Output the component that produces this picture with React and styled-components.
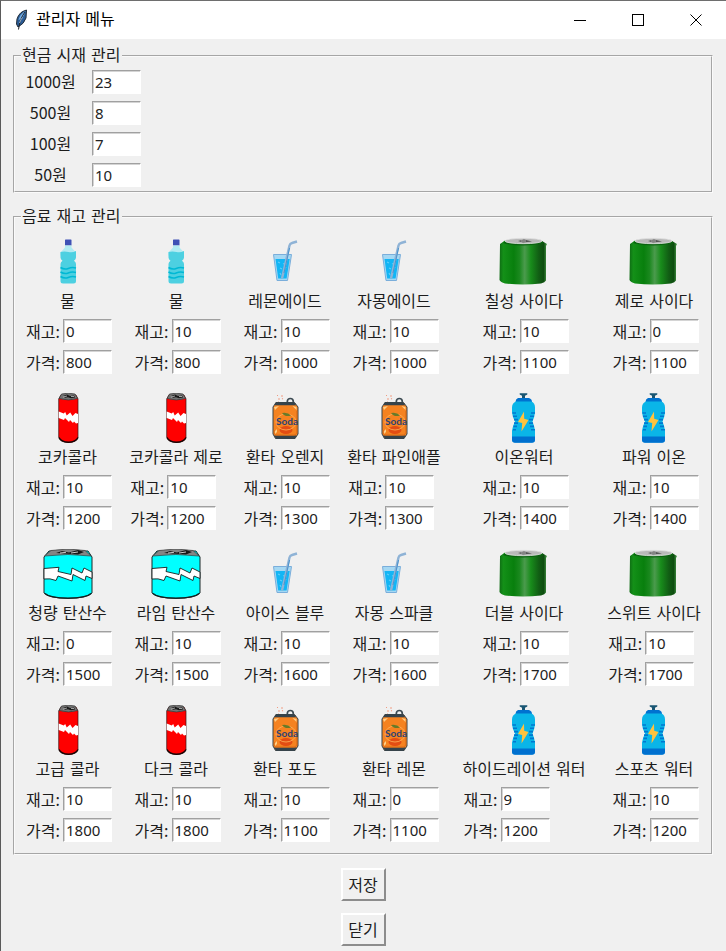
import React, { useId } from "react";
import styled, { createGlobalStyle } from "styled-components";

const GlobalStyle = createGlobalStyle`
  *, *::before, *::after { box-sizing: border-box; }
  body {
    margin: 0;
    background: #f0f0f0;
    color: #1c1c1c;
    font: 16px/22px "Noto Sans CJK KR", sans-serif;
  }
`;

const headingFont = `"DejaVu Sans", "Noto Sans CJK KR", sans-serif`;

const Window = styled.div`
  min-height: 100vh;
  border-top: 1px solid #6e6e6e;
  border-left: 1px solid #5a5a5a;
  background: #f0f0f0;
`;

const TitleBar = styled.header`
  display: flex;
  align-items: center;
  height: 38px;
  padding: 0 1px 0 12px;
  background: #fff;
  color: #000;
`;

const Title = styled.h1`
  flex: 1;
  margin: 0 0 0 6px;
  font-family: ${headingFont};
  font-size: 16px;
  font-weight: 400;
`;

const CaptionButton = styled.button`
  display: flex;
  align-items: center;
  justify-content: center;
  width: 58px;
  height: 38px;
  padding: 0;
  border: 0;
  background: transparent;
`;

const Content = styled.main`
  display: flex;
  flex-direction: column;
  gap: 13px;
  padding: 6px 13px 5px 12px;
`;

const Group = styled.fieldset`
  min-width: 0;
  margin: 0;
  padding: 0;
  border: 2px groove #fafafa;
`;

const Legend = styled.legend`
  margin-left: 6px;
  padding: 0 1px;
  font-family: ${headingFont};
`;

const CashGrid = styled.div`
  display: grid;
  grid-template-columns: 59px 49px;
  grid-auto-rows: 24px;
  column-gap: 12px;
  row-gap: 7px;
  padding: 3px 6px 4px;
`;

const CashLabel = styled.label`
  text-align: center;
  line-height: 22px;
`;

const NumberBox = styled.input`
  width: 49px;
  height: 24px;
  padding: 0 1px 1px 2px;
  border: 1px solid;
  border-color: #a0a0a0 #fff #fff #a0a0a0;
  border-radius: 0;
  outline: 0;
  background: #fff;
  box-shadow: inset 1px 1px #d4d4d4;
  color: #222;
  font: 15px/20px "Noto Sans", sans-serif;
`;

const DrinkGrid = styled.div`
  display: grid;
  grid-template-columns: 105fr 112fr 106fr 112fr 148fr 112fr;
  row-gap: 19px;
  justify-items: center;
  padding: 9px 1px 11px 0;
`;

const Drink = styled.section`
  display: flex;
  flex-direction: column;
  align-items: center;
  min-width: 89px;
`;

const DrinkName = styled.h2`
  margin: 0;
  padding: 0 2px;
  font-family: ${headingFont};
  font-size: 16px;
  font-weight: 400;
  line-height: 30px;
  height: 32px;
  white-space: nowrap;
`;

const Fields = styled.div`
  display: grid;
  grid-template-columns: 37px 49px;
  grid-auto-rows: 24px;
  row-gap: 7px;
  align-self: flex-start;
  padding-left: 3px;
`;

const FieldLabel = styled.label`
  line-height: 24px;
`;

const Picture = styled.svg`
  display: block;
  width: 50px;
  height: 50px;
`;

const Actions = styled.div`
  display: flex;
  flex-direction: column;
  align-items: center;
  gap: 12px;
`;

const PushButton = styled.button`
  width: 45px;
  height: 33px;
  padding: 0 0 2px;
  border: 2px solid;
  border-color: #fff #8c8c8c #8c8c8c #fff;
  background: #f0f0f0;
  color: #1c1c1c;
  font: inherit;
`;

function Water() {
  return (
    <Picture viewBox="0 0 50 50" aria-hidden="true">
      <rect x="22" y="2.5" width="6.5" height="6" rx=".6" fill="#3f51b5" />
      <path d="M22 8.5h6.5v2l4.500 5v3H17.500v-3l4.500-5z" fill="#b2ebf2" />
      <path d="M17.500 15q4-1 8 0t7.500-1v6.500q0 2-2 3.200 2 1.200 2 3.300v17q0 2.500-2.500 2.500H20q-2.500 0-2.500-2.500V27q0-2 2-3.300-2-1.200-2-3.200z" fill="#4dd0e1" />
      <path d="M17.500 30.500q4 2.500 7.700 1t7.800-.5M17.500 35q4 2.500 7.700 1t7.800-.5M17.500 39.500q4 2.500 7.700 1t7.800-.5" fill="none" stroke="#00b8d4" strokeWidth="1.500" />
    </Picture>
  );
}

function Ade() {
  return (
    <Picture viewBox="0 0 50 50" aria-hidden="true">
      <path d="M13.500 17.500h18L27.500 43.500H17z" fill="#a5d8f3" stroke="#7aaedb" strokeWidth="1" />
      <path d="M15.500 22h14.200L26.600 41.500H18.200z" fill="#12b5f5" />
      <path d="M18 25l2 1m3 1 3-1m-6 5 2 1m-2 4 1 2m4-9 1 2" stroke="#5fcdf8" strokeWidth="1.200" />
      <path d="M22 41.500 29.500 8.500Q30 6.500 32 6L37 4.500" fill="none" stroke="#8fb3d6" strokeWidth="2.400" />
      <path d="M24 36 29.500 11" stroke="#4a93ce" strokeWidth="1" />
    </Picture>
  );
}

function Cider() {
  const id = useId();
  return (
    <Picture viewBox="0 0 50 50" aria-hidden="true">
      <defs>
        <linearGradient id={id}>
          <stop offset="0" stopColor="#0f6d14" />
          <stop offset=".08" stopColor="#149018" />
          <stop offset=".3" stopColor="#087f0d" />
          <stop offset=".42" stopColor="#1a881e" />
          <stop offset=".53" stopColor="#4b9b4d" />
          <stop offset=".66" stopColor="#188c1b" />
          <stop offset=".83" stopColor="#115d14" />
          <stop offset=".93" stopColor="#0e4d10" />
          <stop offset="1" stopColor="#4a9c4a" />
        </linearGradient>
      </defs>
      <path d="M6 3.500 1 7 .500 43q1 2 5.500 3.500 18 2 36 0 4-1 5-3L47 9l1-2-5-3z" fill={`url(#${id})`} />
      <path d="M4.500 5.500Q24 10 44 5.500" fill="none" stroke="#0b6310" strokeWidth="1.500" />
      <ellipse cx="24.500" cy="4" rx="18.500" ry="2.700" fill="#b9b9b9" stroke="#e1e1e1" strokeWidth=".8" />
      <path d="m19 4 6-1.500 8 2-9 1z" fill="#555" />
      <path d="M22 4h5" stroke="#ddd" strokeWidth=".7" />
    </Picture>
  );
}

function Cola() {
  return (
    <Picture viewBox="0 0 50 50" aria-hidden="true">
      <path d="M18 2 15.700 6v38q1 5 9.800 5.700 8-.5 9.500-5.200V6L33 2z" fill="#ff0000" stroke="#3a1515" strokeWidth=".7" />
      <path d="M16 44.500Q18 49 25.500 49.200 33 49 35 44.500" fill="none" stroke="#170606" strokeWidth="1.500" />
      <path d="M16 5.500 18.500 1Q25-.7 32 1l2.700 4.500Q25.500 8.500 16 5.500z" fill="#737373" stroke="#333" strokeWidth=".7" />
      <path d="m20 3 4-1.500 3 1.500 4-.5 1 2-4 .8-3-1-3 .5z" fill="#191919" />
      <path d="m20 4 4-1m4 .5h3" stroke="#ddd" strokeWidth=".7" />
      <path d="m15.700 18.500 5 2 1.500-1.500 1.500 3.500 3.500-3 2.300 3.500 3-3 2.500 1v9l-2 .5-2-2-1 1.500-3-3-1 2-4-4-1 2-5.300-2z" fill="#fff" />
    </Picture>
  );
}

function OrangeSoda() {
  return (
    <Picture viewBox="0 0 50 50" aria-hidden="true">
      <path d="M17 2.500h1m3 .5h2m-5 3h2m2 0 1-.5m-5 3.500h1" stroke="#ef9b82" strokeWidth="1.200" />
      <circle cx="30.300" cy="8.500" r="3" fill="none" stroke="#3c4a52" strokeWidth="1.700" />
      <path d="M16 9.500h18.500l3.500 4.500v27l-3 4.500H15.500L13 41V14z" fill="#f58220" stroke="#39454a" strokeWidth="1" />
      <path d="M15 9.700h20l1 2.500H15zM14 42.500h22.500l-1.500 3.300H16z" fill="#36434b" />
      <path d="m14 14 5-1-4 4zm0 25 3-3v3l-2 2zM36.500 14l-4-1 4 4z" fill="#ffce85" />
      <path d="M14.300 37v4l1.500 1h19l2-2V18" fill="none" stroke="#dd6d18" strokeWidth="1" />
      <ellipse cx="26" cy="37" rx="6.500" ry="4" fill="#e34d13" />
      <ellipse cx="26" cy="29" rx="10" ry="8" fill="none" stroke="#ffb35a" strokeWidth=".8" />
      <path d="M22 20q6-1 9 2.500-6 2-9-2.500z" fill="#687a29" />
      <text x="16" y="32" fontFamily="Lato" fontWeight="700" fontSize="10" fill="#2e4273">Soda</text>
    </Picture>
  );
}

function IonDrink() {
  return (
    <Picture viewBox="0 0 50 50" aria-hidden="true">
      <path d="M20.700.2h7.600v1.200L26 2.800v3h-3v-3l-2.300-1.400z" fill="#195673" />
      <path d="M19 5h11q3 1 3 4H16.500q0-3 2.500-4z" fill="#0072d0" />
      <path d="M17 8.500h15.500q3.500 1.500 3.500 6v5q-.3 4-2.500 9 2 5 2.500 9v9q0 3-3 3H16q-3 0-3-3v-9q.5-4 3-9-2.700-5-3-9v-5q0-4.500 4-6z" fill="#0ab5e8" />
      <path d="M13 43.500h23v3q0 3.200-3 3.200H16q-3 0-3-3.200z" fill="#0070cf" />
      <path d="M13.500 20h3.500m-3 3.300h4m-3 3.300h4m-4 3.500h4m-4.500 3.300h3.500m-4 3.300h3m15-16.700H36m-5 3.300h4m-5 3.300h4m-4 3.500h4m-3 3.300h4m-3 3.300h4" stroke="#0078d0" strokeWidth="1.600" />
      <path d="m25 18.500-6 10.500 4.200 1-.7 8.500L29.500 27l-4.300-1.200z" fill="#ffc33e" />
    </Picture>
  );
}

function Sparkling() {
  return (
    <Picture viewBox="0 0 50 50" aria-hidden="true">
      <path d="M6 2 1 8v36q4 5 24 5.400 20-.4 24-5.400V8l-4-6z" fill="#00ffff" stroke="#1a2929" strokeWidth="1" />
      <path d="M1.500 7 8 1.500Q25-1.500 42 1.500L48 7Q25 4 1.500 7z" fill="#858585" stroke="#3c3c3c" strokeWidth=".7" />
      <path d="m13 4 6-2 7 1.500L35 1l6 2-6 2.500-10-.7z" fill="#181818" />
      <path d="m17 4 6-.7m5 .7 7-1" stroke="#ddd" strokeWidth=".9" />
      <path d="m1 19.500 15-1.200-1 4.200 13 3 1-6.500 10 5 2-5 8 4v6.500l-6-2.500-1 4.500-12-6-1 6.500L15 27l-2 4.500Q7 29 1 30z" fill="#fff" stroke="#171d1d" strokeWidth=".9" />
      <path d="M2 44.500Q7 49 25 49.200 43 49 48 44.500" fill="none" stroke="#142020" strokeWidth="1.300" />
    </Picture>
  );
}

function Feather() {
  return (
    <svg width="17" height="22" viewBox="0 0 17 22" aria-hidden="true">
      <path d="M13.500 1Q6 3 4 10l-.500 5 1.500 3q6-3 8-9z" fill="#2a5c96" stroke="#222c38" strokeWidth="1" />
      <path d="M12.500 2Q7 5 5.500 11q4-1 5.500-5z" fill="#77afe4" />
      <path d="M12 3Q7 9 5.500 20.500" fill="none" stroke="#1c2027" strokeWidth="1" />
      <path d="M9.500 8.500Q8 10 6.500 14" fill="none" stroke="#d5e8fa" strokeWidth=".7" />
    </svg>
  );
}

const CASH = [["1000원", 23], ["500원", 8], ["100원", 7], ["50원", 10]];

const DRINKS = [
  ["물", Water, 0, 800], ["물", Water, 10, 800],
  ["레몬에이드", Ade, 10, 1000], ["자몽에이드", Ade, 10, 1000],
  ["칠성 사이다", Cider, 10, 1100], ["제로 사이다", Cider, 0, 1100],
  ["코카콜라", Cola, 10, 1200], ["코카콜라 제로", Cola, 10, 1200],
  ["환타 오렌지", OrangeSoda, 10, 1300], ["환타 파인애플", OrangeSoda, 10, 1300],
  ["이온워터", IonDrink, 10, 1400], ["파워 이온", IonDrink, 10, 1400],
  ["청량 탄산수", Sparkling, 0, 1500], ["라임 탄산수", Sparkling, 10, 1500],
  ["아이스 블루", Ade, 10, 1600], ["자몽 스파클", Ade, 10, 1600],
  ["더블 사이다", Cider, 10, 1700], ["스위트 사이다", Cider, 10, 1700],
  ["고급 콜라", Cola, 10, 1800], ["다크 콜라", Cola, 10, 1800],
  ["환타 포도", OrangeSoda, 10, 1100], ["환타 레몬", OrangeSoda, 0, 1100],
  ["하이드레이션 워터", IonDrink, 9, 1200], ["스포츠 워터", IonDrink, 10, 1200],
];

function DrinkItem({ name, Art, stock, price }) {
  const id = useId();
  return (
    <Drink>
      <Art />
      <DrinkName>{name}</DrinkName>
      <Fields>
        <FieldLabel htmlFor={`${id}-stock`}>재고:</FieldLabel>
        <NumberBox id={`${id}-stock`} defaultValue={stock} />
        <FieldLabel htmlFor={`${id}-price`}>가격:</FieldLabel>
        <NumberBox id={`${id}-price`} defaultValue={price} />
      </Fields>
    </Drink>
  );
}

export default function App() {
  return (
    <Window>
      <GlobalStyle />
      <TitleBar>
        <Feather />
        <Title>관리자 메뉴</Title>
        <CaptionButton aria-label="최소화">
          <svg width="12" height="12" shapeRendering="crispEdges"><path d="M0 6.500h12" stroke="#000" /></svg>
        </CaptionButton>
        <CaptionButton aria-label="최대화">
          <svg width="12" height="12" shapeRendering="crispEdges"><rect x=".5" y=".5" width="11" height="11" fill="none" stroke="#000" /></svg>
        </CaptionButton>
        <CaptionButton aria-label="창 닫기">
          <svg width="12" height="12"><path d="m.5.500 11 11m0-11-11 11" stroke="#000" /></svg>
        </CaptionButton>
      </TitleBar>
      <Content>
        <Group>
          <Legend>현금 시재 관리</Legend>
          <CashGrid>
            {CASH.map(([label, count]) => (
              <React.Fragment key={label}>
                <CashLabel htmlFor={`cash-${label}`}>{label}</CashLabel>
                <NumberBox id={`cash-${label}`} defaultValue={count} />
              </React.Fragment>
            ))}
          </CashGrid>
        </Group>
        <Group>
          <Legend>음료 재고 관리</Legend>
          <DrinkGrid>
            {DRINKS.map(([name, Art, stock, price], i) => (
              <DrinkItem key={i} name={name} Art={Art} stock={stock} price={price} />
            ))}
          </DrinkGrid>
        </Group>
        <Actions>
          <PushButton>저장</PushButton>
          <PushButton>닫기</PushButton>
        </Actions>
      </Content>
    </Window>
  );
}
